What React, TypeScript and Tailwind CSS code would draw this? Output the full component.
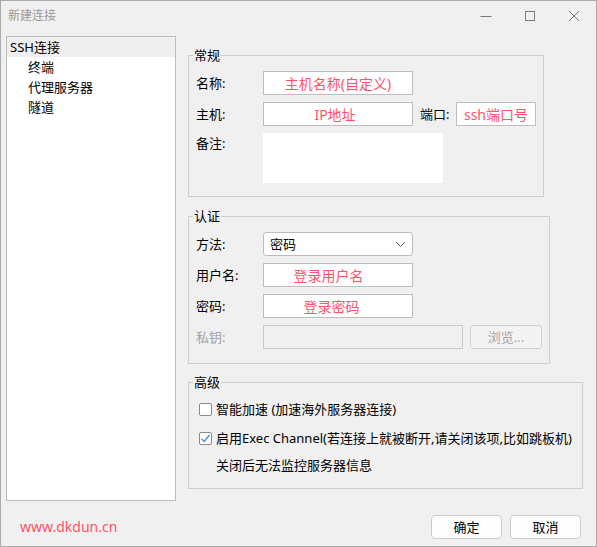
import React from "react";

const font = "font-['Noto_Sans','Noto_Sans_CJK_SC',sans-serif]";

const TextRow: React.FC<{ label: string; placeholder: string; shift?: string }> = ({
  label,
  placeholder,
  shift = "",
}) => (
  <div className="flex items-center h-[24px]">
    <span className="w-[67px] shrink-0 text-[13px] leading-[20px] text-black">{label}</span>
    <input
      readOnly
      placeholder={placeholder}
      className={`w-[150px] h-[24px] bg-white border border-[#bdbdbd] text-center text-[14px] leading-[20px] outline-none placeholder:text-[#ff5369] ${shift}`}
    />
  </div>
);

const Legend: React.FC<{ children: React.ReactNode }> = ({ children }) => (
  <legend className="ml-[4px] px-[1px] text-[13px] leading-[16px] text-black">{children}</legend>
);

const Checkbox: React.FC<{ checked?: boolean }> = ({ checked }) => (
  <span className="w-[13px] h-[13px] shrink-0 rounded-[2px] border border-[#8a8a8a] bg-white flex items-center justify-center">
    {checked && (
      <svg width="11" height="11" viewBox="0 0 11 11" fill="none">
        <path d="M1.5 5.8 L4.2 8.5 L9.5 2" stroke="#3d8ddb" strokeWidth="1.3" />
      </svg>
    )}
  </span>
);

export default function App() {
  return (
    <div className={`w-[597px] h-[547px] border border-[#aaaaaa] bg-[#f0f0f0] flex flex-col ${font}`}>
      {/* title bar */}
      <div className="h-[30px] shrink-0 flex items-center">
        <span className="pl-[7px] text-[12px] leading-[16px] text-[#9a9a9a]">新建连接</span>
        <div className="ml-auto flex h-full">
          <div className="w-[44px] flex items-center justify-center">
            <svg width="12" height="12" viewBox="0 0 12 12">
              <path d="M0.5 6.5 H11.5" stroke="#7a7a7a" strokeWidth="1" />
            </svg>
          </div>
          <div className="w-[44px] flex items-center justify-center">
            <svg width="12" height="12" viewBox="0 0 12 12" fill="none">
              <rect x="1.5" y="1.5" width="9" height="9" stroke="#7a7a7a" strokeWidth="1" />
            </svg>
          </div>
          <div className="w-[44px] flex items-center justify-center">
            <svg width="12" height="12" viewBox="0 0 12 12" fill="none">
              <path d="M1 1 L11 11 M11 1 L1 11" stroke="#7a7a7a" strokeWidth="1" />
            </svg>
          </div>
        </div>
      </div>

      {/* body */}
      <div className="flex pt-[5px] pl-[5px] gap-[12px]">
        {/* tree */}
        <div className="w-[170px] h-[465px] shrink-0 bg-white border border-[#bcbcbc] text-[13px] leading-[20px] text-black">
          <div className="h-[20px] bg-[#efefef] pl-[3px]">SSH连接</div>
          <div className="h-[20px] pl-[21px]">终端</div>
          <div className="h-[20px] pl-[21px]">代理服务器</div>
          <div className="h-[20px] pl-[21px]">隧道</div>
        </div>

        {/* settings */}
        <div className="flex flex-col mt-[11px]">
          <fieldset className="w-[356px] border border-[#cecece]">
            <Legend>常规</Legend>
            <div className="pt-[8px] pb-[13px] pl-[7px]">
              <TextRow label="名称:" placeholder="主机名称(自定义)" />
              <div className="flex items-center h-[24px] mt-[7px]">
                <span className="w-[67px] shrink-0 text-[13px] leading-[20px] text-black">主机:</span>
                <input
                  readOnly
                  placeholder="IP地址"
                  className="w-[150px] h-[24px] bg-white border border-[#bdbdbd] text-center text-[14px] pr-[6px] outline-none placeholder:text-[#ff5369]"
                />
                <span className="ml-[7px] w-[36px] shrink-0 text-[13px] leading-[20px] text-black">端口:</span>
                <input
                  readOnly
                  placeholder="ssh端口号"
                  className="w-[80px] h-[24px] bg-white border border-[#bdbdbd] text-center text-[14px] outline-none placeholder:text-[#ff5369]"
                />
              </div>
              <div className="flex mt-[7px]">
                <span className="w-[67px] shrink-0 text-[13px] leading-[20px] text-black">备注:</span>
                <textarea readOnly className="w-[180px] h-[50px] bg-white resize-none outline-none" />
              </div>
            </div>
          </fieldset>

          <fieldset className="w-[362px] mt-[11px] border border-[#cecece]">
            <Legend>认证</Legend>
            <div className="pt-[8px] pb-[14px] pl-[7px]">
              <div className="flex items-center h-[24px]">
                <span className="w-[67px] shrink-0 text-[13px] leading-[20px] text-black">方法:</span>
                <div className="w-[150px] h-[24px] bg-white border border-[#bdbdbd] rounded-[3px] flex items-center pl-[6px] pr-[6px]">
                  <span className="text-[13px] leading-[20px] text-black">密码</span>
                  <svg className="ml-auto" width="11" height="7" viewBox="0 0 11 7" fill="none">
                    <path d="M1 1 L5.5 5.5 L10 1" stroke="#5a5a5a" strokeWidth="1" />
                  </svg>
                </div>
              </div>
              <div className="mt-[7px]">
                <TextRow label="用户名:" placeholder="登录用户名" shift="pr-[19px]" />
              </div>
              <div className="mt-[7px]">
                <TextRow label="密码:" placeholder="登录密码" shift="pr-[13px]" />
              </div>
              <div className="flex items-center h-[24px] mt-[7px]">
                <span className="w-[67px] shrink-0 text-[13px] leading-[20px] text-[#a3a3a3]">私钥:</span>
                <input
                  disabled
                  className="w-[200px] h-[24px] bg-[#f0f0f0] border border-[#c9c9c9] outline-none"
                />
                <button
                  disabled
                  className="ml-[7px] w-[72px] h-[24px] rounded-[3px] border border-[#cfcfcf] bg-[#f3f3f3] text-[13px] leading-[20px] text-[#a5a5a5]"
                >
                  浏览...
                </button>
              </div>
            </div>
          </fieldset>

          <fieldset className="w-[395px] mt-[10px] border border-[#cecece]">
            <Legend>高级</Legend>
            <div className="pt-[9px] pb-[13px] pl-[10px]">
              <label className="flex items-center h-[20px] gap-[4px] text-[13px] leading-[20px] text-black">
                <Checkbox />
                <span>智能加速 (加速海外服务器连接)</span>
              </label>
              <label className="flex items-center h-[20px] mt-[9px] gap-[4px] text-[13px] leading-[20px] text-black whitespace-nowrap">
                <Checkbox checked />
                <span>启用Exec Channel(若连接上就被断开,请关闭该项,比如跳板机)</span>
              </label>
              <div className="h-[20px] mt-[7px] pl-[17px] text-[13px] leading-[20px] text-black">
                关闭后无法监控服务器信息
              </div>
            </div>
          </fieldset>
        </div>
      </div>

      {/* footer */}
      <div className="flex items-center mt-[14px] pl-[19px] pr-[15px]">
        <span className="text-[14px] leading-[20px] text-[#ff5369]">www.dkdun.cn</span>
        <div className="ml-auto flex gap-[8px]">
          <button className="w-[71px] h-[24px] rounded-[4px] border border-[#cccccc] bg-[#fdfdfd] text-[13px] leading-[20px] text-black">
            确定
          </button>
          <button className="w-[71px] h-[24px] rounded-[4px] border border-[#cccccc] bg-[#fdfdfd] text-[13px] leading-[20px] text-black">
            取消
          </button>
        </div>
      </div>
    </div>
  );
}
